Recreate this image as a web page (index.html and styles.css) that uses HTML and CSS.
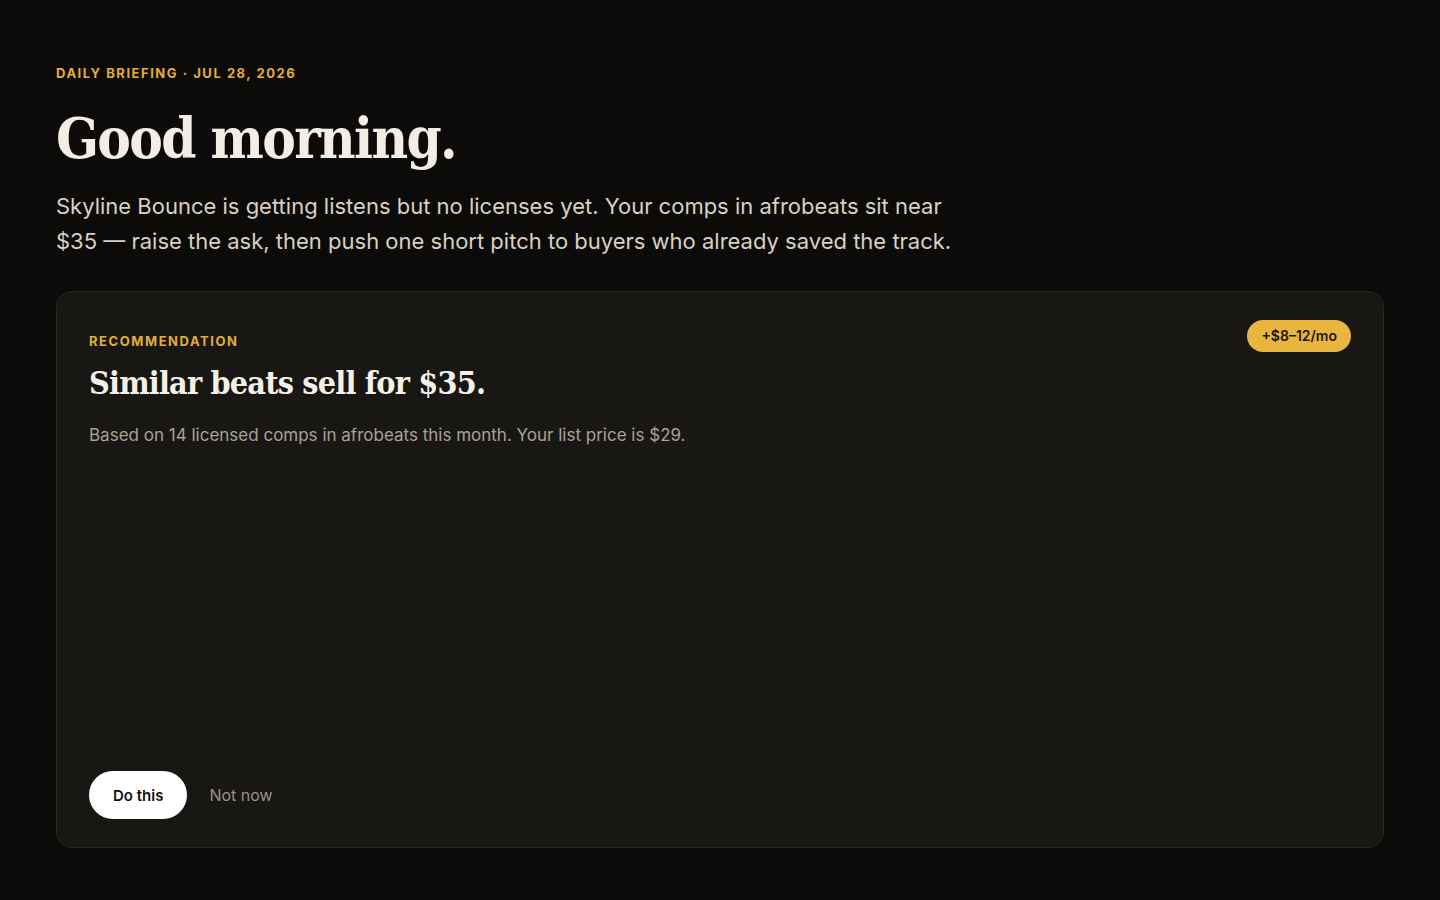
FILE: index.html
```html
<!DOCTYPE html>
<html lang="en">
<head>
<meta charset="utf-8">
<title>Daily briefing</title>
<link rel="stylesheet" href="styles.css">
</head>
<body>
<main class="page">
  <header class="intro">
    <p class="eyebrow">Daily briefing · Jul 28, 2026</p>
    <h1 class="greeting">Good morning.</h1>
    <p class="summary">Skyline Bounce is getting listens but no licenses yet. Your comps in afrobeats sit near $35 — raise the ask, then push one short pitch to buyers who already saved the track.</p>
  </header>
  <section class="card">
    <div class="card-top">
      <div class="card-text">
        <p class="label">Recommendation</p>
        <h2 class="card-title">Similar beats sell for $35.</h2>
        <p class="card-desc">Based on 14 licensed comps in afrobeats this month. Your list price is $29.</p>
      </div>
      <span class="badge">+$8–12/mo</span>
    </div>
    <div class="actions">
      <button class="btn-primary">Do this</button>
      <button class="btn-ghost">Not now</button>
    </div>
  </section>
</main>
</body>
</html>
```
FILE: styles.css
```css
* { box-sizing: border-box; }
html, body { margin: 0; padding: 0; }
body {
  background: #0c0b0a;
  color: #f2eee6;
  font-family: Inter, "Noto Sans", sans-serif;
}
.page {
  min-height: 100vh;
  display: flex;
  flex-direction: column;
  padding: 65px 56px 52px;
}
.intro { margin-bottom: 32px; }
.eyebrow {
  margin: 0;
  color: #e3ad3c;
  font-size: 13px;
  font-weight: 700;
  letter-spacing: 0.118em;
  text-transform: uppercase;
  line-height: 16px;
}
.greeting {
  margin: 25px 0 0;
  font-family: "DejaVu Serif", Georgia, serif;
  font-stretch: condensed;
  font-weight: 700;
  font-size: 56px;
  line-height: 64px;
  letter-spacing: -0.03em;
  color: #f2eee6;
}
.summary {
  margin: 19px 0 0;
  max-width: 910px;
  font-size: 22px;
  line-height: 35px;
  color: #d8d1c4;
}
.card {
  flex: 1;
  display: flex;
  flex-direction: column;
  justify-content: space-between;
  background: #191714;
  border: 1px solid #2a2723;
  border-radius: 16px;
  padding: 28px 32px 28px;
}
.card-top {
  display: flex;
  justify-content: space-between;
  align-items: flex-start;
}
.label {
  margin: 13px 0 0;
  color: #e3ad3c;
  font-size: 13px;
  font-weight: 700;
  letter-spacing: 0.12em;
  text-transform: uppercase;
  line-height: 16px;
}
.card-title {
  margin: 14px 0 0;
  font-family: "DejaVu Serif", Georgia, serif;
  font-stretch: condensed;
  font-weight: 700;
  font-size: 32px;
  line-height: 40px;
  letter-spacing: -0.025em;
  color: #f4f0e8;
}
.card-desc {
  margin: 20px 0 0;
  font-size: 17px;
  line-height: 24px;
  color: #a9a196;
}
.badge {
  background: #e8b53e;
  color: #1a1408;
  font-size: 14px;
  font-weight: 600;
  padding: 8px 14px;
  border-radius: 999px;
  line-height: 16px;
}
.actions {
  display: flex;
  align-items: center;
  gap: 22px;
}
.btn-primary {
  font-family: inherit;
  background: #ffffff;
  color: #111111;
  border: none;
  border-radius: 999px;
  height: 48px;
  padding: 0 24px;
  font-size: 15px;
  font-weight: 600;
}
.btn-ghost {
  font-family: inherit;
  background: none;
  border: none;
  padding: 0;
  color: #9a9287;
  font-size: 16px;
}
```
